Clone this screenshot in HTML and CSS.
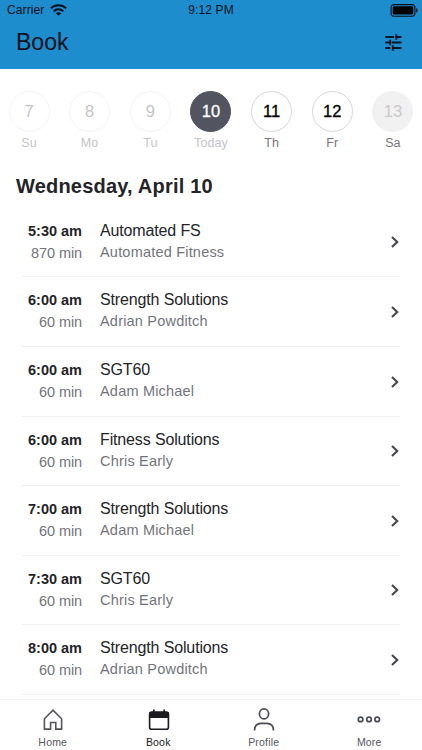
FILE: index.html
```html
<!DOCTYPE html>
<html lang="en">
<head>
<meta charset="utf-8">
<title>Book</title>
<link rel="stylesheet" href="styles.css">
</head>
<body>
<div class="app">
  <header class="header">
    <div class="status">
      <div class="carrier"><span>Carrier</span>
        <svg class="wifi" width="17" height="12" viewBox="0 0 17 12" fill="none" stroke="#061019" stroke-width="2"><path d="M.8 4.3C5.1.1 11.9.1 16.2 4.3M3.7 7.2c2.7-2.5 6.9-2.5 9.6 0"/><path d="M8.5 11.8 5.9 9.3c1.4-1.3 3.8-1.3 5.2 0z" fill="#061019" stroke="none"/></svg>
      </div>
      <div class="clock">9:12 PM</div>
      <svg class="battery" width="28" height="13" viewBox="0 0 28 13"><rect x="1.1" y=".6" width="23.8" height="11.6" rx="3" fill="none" stroke="#061019" stroke-width="1.1"/><rect x="2.7" y="2.3" width="20.6" height="8.2" rx="1.4" fill="#000"/><path d="M26.1 4.2c2 .5 2 3.9 0 4.4z" fill="#061019"/></svg>
    </div>
    <div class="titlebar">
      <h1>Book</h1>
      <svg width="17" height="17" viewBox="0 0 17 17" fill="none" stroke="#071521" stroke-width="1.9"><path d="M.3 3h8.8M11.2 3h5.3M11.3.2v5.6M.3 8.5h4M6.8 8.5h9.7M5.2 5.7v5.6M.3 14h5M7.4 14h9.1M7.8 11.2v5.6"/></svg>
    </div>
  </header>
  <nav class="days">
    <div class="day past"><b>7</b><span>Su</span></div>
    <div class="day past"><b>8</b><span>Mo</span></div>
    <div class="day past"><b>9</b><span>Tu</span></div>
    <div class="day today"><b>10</b><span>Today</span></div>
    <div class="day"><b>11</b><span>Th</span></div>
    <div class="day"><b>12</b><span>Fr</span></div>
    <div class="day closed"><b>13</b><span>Sa</span></div>
  </nav>
  <h2>Wednesday, April 10</h2>
  <main class="list">
    <article class="row"><div class="when"><strong>5:30 am</strong><span>870 min</span></div><div class="what"><p>Automated FS</p><span>Automated Fitness</span></div><svg class="chev" viewBox="0 0 8 12"><path d="m1 1 5.2 5L1 11"/></svg></article>
    <article class="row"><div class="when"><strong>6:00 am</strong><span>60 min</span></div><div class="what"><p>Strength Solutions</p><span>Adrian Powditch</span></div><svg class="chev" viewBox="0 0 8 12"><path d="m1 1 5.2 5L1 11"/></svg></article>
    <article class="row"><div class="when"><strong>6:00 am</strong><span>60 min</span></div><div class="what"><p>SGT60</p><span>Adam Michael</span></div><svg class="chev" viewBox="0 0 8 12"><path d="m1 1 5.2 5L1 11"/></svg></article>
    <article class="row"><div class="when"><strong>6:00 am</strong><span>60 min</span></div><div class="what"><p>Fitness Solutions</p><span>Chris Early</span></div><svg class="chev" viewBox="0 0 8 12"><path d="m1 1 5.2 5L1 11"/></svg></article>
    <article class="row"><div class="when"><strong>7:00 am</strong><span>60 min</span></div><div class="what"><p>Strength Solutions</p><span>Adam Michael</span></div><svg class="chev" viewBox="0 0 8 12"><path d="m1 1 5.2 5L1 11"/></svg></article>
    <article class="row"><div class="when"><strong>7:30 am</strong><span>60 min</span></div><div class="what"><p>SGT60</p><span>Chris Early</span></div><svg class="chev" viewBox="0 0 8 12"><path d="m1 1 5.2 5L1 11"/></svg></article>
    <article class="row"><div class="when"><strong>8:00 am</strong><span>60 min</span></div><div class="what"><p>Strength Solutions</p><span>Adrian Powditch</span></div><svg class="chev" viewBox="0 0 8 12"><path d="m1 1 5.2 5L1 11"/></svg></article>
  </main>
  <footer class="tabs">
    <div class="tab"><svg width="24" height="24" viewBox="0 0 24 24" fill="none" stroke="#55565d" stroke-width="1.6"><path d="M3.4 22.1V11.8L12 3.2l8.6 8.6v10.3h-5.8v-6.6H9.6v6.6z"/></svg><span>Home</span></div>
    <div class="tab active"><svg width="24" height="24" viewBox="0 0 24 24"><rect x="3.6" y="5.3" width="18.8" height="17" rx="2" fill="none" stroke="#1b1b20" stroke-width="1.6"/><path d="M3 10.9V6.7q0-2.2 2.2-2.2H7V2.6h1.7v1.9h8.7V2.6H19v1.9h1.9q2.2 0 2.2 2.2v4.2z" fill="#1b1b20"/></svg><span>Book</span></div>
    <div class="tab"><svg width="24" height="24" viewBox="0 0 24 24" fill="none" stroke="#4c4d54" stroke-width="1.7"><ellipse cx="12" cy="6.9" rx="4.6" ry="5"/><path d="M2.5 23.4c0-4.9 3.2-7 7-7h5c3.8 0 7 2.1 7 7"/></svg><span>Profile</span></div>
    <div class="tab"><svg width="24" height="24" viewBox="0 0 24 24" fill="none" stroke="#4c4d54" stroke-width="1.7"><circle cx="3.6" cy="12.4" r="2.3"/><circle cx="12" cy="12.4" r="2.3"/><circle cx="20.2" cy="12.4" r="2.3"/></svg><span>More</span></div>
  </footer>
</div>
</body>
</html>
```
FILE: styles.css
```css
* { box-sizing: border-box; }
body { margin: 0; background: #fff; font-family: "Liberation Sans", Arial, sans-serif; color: #242428; }
h1, h2, p { margin: 0; font-weight: 400; }
svg { display: block; flex: none; overflow: visible; }
.app { width: 422px; height: 750px; display: flex; flex-direction: column; overflow: hidden; }
.header { height: 69px; flex: none; background: #1e8dce; color: #071019; }
.status { height: 20px; display: grid; grid-template-columns: 1fr auto 1fr; align-items: center; padding: 0 4px 0 7px; font-size: 12px; }
.carrier { display: flex; align-items: center; gap: 6px; letter-spacing: .1px; }
.clock { letter-spacing: .15px; padding-right: 3px; }
.battery { justify-self: end; }
.titlebar { height: 45px; display: flex; align-items: center; justify-content: space-between; padding: 0 20px 0 16px; }
h1 { font-size: 23px; letter-spacing: 0; }
.days { flex: none; display: flex; justify-content: space-between; padding: 22px 8px 0; height: 100px; }
.day { width: 42px; display: flex; flex-direction: column; align-items: center; }
.day b { width: 41px; height: 41px; display: flex; align-items: center; justify-content: center; border: 1px solid #d6d6d8; border-radius: 50%; font-size: 16.5px; font-weight: 400; color: #000; -webkit-text-stroke: .3px; }
.day span { font-size: 12.5px; line-height: 14px; margin-top: 4px; color: #75757b; letter-spacing: .1px; }
.day.past b { border-color: #f5f5f5; color: #c4c4c6; -webkit-text-stroke: 0; }
.day.past span, .day.today span { color: #c4c4c7; }
.day.today b { background: #52545f; border-color: #52545f; color: #fff; }
.day.closed b { background: #f1f1f1; border-color: #f1f1f1; color: #c9c9ca; -webkit-text-stroke: 0; }
h2 { flex: none; height: 38.9px; padding-left: 16px; font-size: 20px; line-height: 34px; font-weight: 700; letter-spacing: .2px; }
.list { flex: none; margin: 0 22px; }
.row { height: 69.6px; display: flex; border-bottom: 1px solid #f0f0f1; }
.when { width: 60px; padding-top: 13px; display: flex; flex-direction: column; align-items: flex-end; }
.what { flex: 1; padding: 13px 0 0 18px; }
.when strong, .what p { display: block; font-size: 14.5px; line-height: 20px; letter-spacing: 0; }
.what p { font-size: 16px; letter-spacing: -.14px; }
.when span, .what span { display: block; font-size: 14.5px; line-height: 20px; letter-spacing: -.1px; color: #73747b; margin-top: 2px; }
.what span { margin-top: 1px; letter-spacing: .2px; }
.chev { width: 8px; height: 12px; margin: 28.5px 1.5px 0 0; fill: none; stroke: #48494f; stroke-width: 2.2; }
.tabs { flex: none; height: 51px; margin-top: auto; display: grid; grid-template-columns: repeat(4, 1fr); border-top: 1px solid #f0f0f1; background: #fff; }
.tab { display: flex; flex-direction: column; align-items: center; padding-top: 7px; font-size: 10.5px; line-height: 12px; color: #55565d; letter-spacing: .2px; }
.tab span { margin-top: 5px; }
.tab.active { color: #1b1b20; }
```
